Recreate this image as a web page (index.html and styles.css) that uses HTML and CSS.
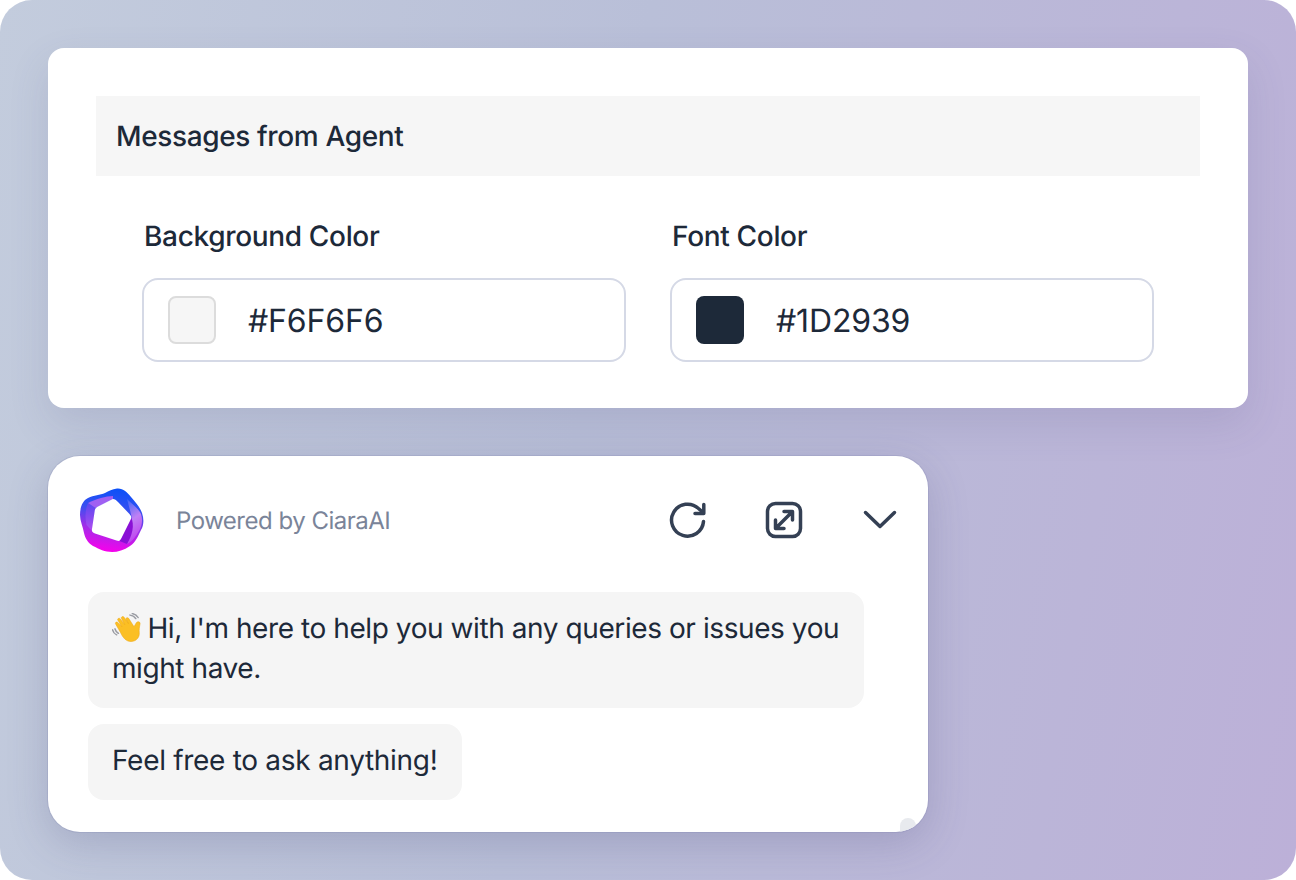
FILE: index.html
```html
<!DOCTYPE html>
<html lang="en">
<head>
    <meta charset="UTF-8">
    <meta name="viewport" content="width=device-width, initial-scale=1.0">
    <title>Chat widget colors</title>
    <link rel="stylesheet" href="styles.css">
</head>
<body>
    <div class="frame">
        <!-- Color settings -->
        <section class="card">
            <div class="card-title">Messages from Agent</div>
            <div class="fields">
                <div class="field">
                    <label>Background Color</label>
                    <div class="color-input">
                        <span class="swatch swatch-light"></span>
                        <span class="color-value">#F6F6F6</span>
                    </div>
                </div>
                <div class="field">
                    <label>Font Color</label>
                    <div class="color-input">
                        <span class="swatch swatch-dark"></span>
                        <span class="color-value">#1D2939</span>
                    </div>
                </div>
            </div>
        </section>

        <!-- Chat preview -->
        <section class="chat">
            <div class="chat-head">
                <svg class="logo" width="64" height="64" viewBox="0 0 64 64">
                    <defs>
                        <linearGradient id="ring" x1="0.6" y1="0" x2="0.45" y2="1">
                            <stop offset="0" stop-color="#0a50f8"/>
                            <stop offset="0.35" stop-color="#3a50f0"/>
                            <stop offset="0.65" stop-color="#a02ee8"/>
                            <stop offset="1" stop-color="#f800ec"/>
                        </linearGradient>
                        <linearGradient id="band" x1="0.2" y1="0" x2="0.5" y2="1">
                            <stop offset="0" stop-color="#3a66f5"/>
                            <stop offset="0.5" stop-color="#c080f5"/>
                            <stop offset="1" stop-color="#c040ee"/>
                        </linearGradient>
                        <linearGradient id="side" x1="0.5" y1="0" x2="0.5" y2="1">
                            <stop offset="0" stop-color="#5a48f0"/>
                            <stop offset="1" stop-color="#b04cf0"/>
                        </linearGradient>
                    </defs>
                    <path fill="url(#ring)" d="M37 0.500C43 0 47 4 51 9C55 14 60 19 62 25C64 31 64 37 61 42C58 48 56 54 50 58C44 62 38 64 32 64C25 64 19 61 13 58C8 55 5 50 4 45C3 39 0 33 0 27C0 20 2 13 8 10C14 7 20 7 25 5C29 3 32 1 37 0.500Z"/>
                    <path fill="url(#band)" d="M47 11C52 16 59 21 61 26C63 32 62 38 59 43C56 48 53 53 47 56L43 50L52 30Z"/>
                    <path fill="#8a10d6" d="M51 29L39.500 53L47 56C52 48 55 37 51 29Z"/>
                    <path fill="url(#side)" d="M15.500 20L12 43L6.500 37C5 30 5 22 8 15Z"/>
                    <path fill="#a060f2" d="M8 15C16 11 26 8 33 8L33 11L15.500 20Z"/>
                    <path fill="#fff" d="M32.700 11C34.500 10.800 36 12 38 14L49 25.500C51.500 28 51.800 29.500 50.700 31.500L41.500 50C40 53 39 53.300 36.500 52.500L15 45.500C12.200 44.500 11.700 43.500 12 41L14.700 23C15 20.800 15.700 20 17.500 18.800Z"/>
                </svg>
                <span class="powered">Powered by CiaraAI</span>
                <div class="chat-actions">
                    <svg width="40" height="40" viewBox="0 0 40 40" fill="none" stroke="#344054" stroke-width="3.500" stroke-linecap="round" stroke-linejoin="round">
                        <path d="M35.500 21.500A16 16 0 1 1 30.500 8.500L35 12.500"/>
                        <path d="M35.800 4.500V13.500H27"/>
                    </svg>
                    <svg width="40" height="40" viewBox="0 0 40 40" fill="none" stroke="#344054" stroke-width="3.500" stroke-linecap="round" stroke-linejoin="round">
                        <rect x="3.500" y="3.500" width="33" height="33" rx="8"/>
                        <path d="M12.500 27.500L27.500 12.500M20 11.500H28.500V20M11.500 20V28.500H20"/>
                    </svg>
                    <svg width="40" height="40" viewBox="0 0 40 40" fill="none" stroke="#344054" stroke-width="3.500" stroke-linecap="round" stroke-linejoin="round">
                        <path d="M5.500 12.500L20 26.500L34.500 12.500"/>
                    </svg>
                </div>
            </div>
            <div class="messages">
                <div class="bubble bubble-wide">
                    <svg class="wave" width="29" height="29" viewBox="0.5 0.5 25 28.500" preserveAspectRatio="none">
                        <g fill="none" stroke="#9a9ca3" stroke-width="1.300" stroke-linecap="round">
                            <path d="M16 2.500C18.500 2.800 20 4 21 6M18 1C20.500 1.500 22 3 23 5"/>
                            <path d="M1 17C1.500 19.500 2.500 21 4.500 22M3 16C3.500 18 4.500 19.500 6 20.500"/>
                        </g>
                        <path fill="#fbbf24" stroke="#eea70e" stroke-width="0.500" d="M8 20L3.500 11C3 9.700 4.800 8.800 5.700 10L9 14L5.500 7.500C4.800 6 6.800 5 7.700 6.300L11.500 12L8.700 5.800C8 4.300 10 3.300 10.900 4.600L14.700 11L12.700 6.800C12 5.300 14 4.400 14.800 5.700L19.500 14L21.500 10C22.300 8.500 25 9 24.700 11C24.200 14 23.700 17 24 20C24.300 24 22 28 17.500 28.500C13 29 10 25 8 20Z"/>
                    </svg>
                    Hi, I'm here to help you with any queries or issues you might have.
                </div>
                <div class="bubble bubble-short">Feel free to ask anything!</div>
            </div>
            <span class="scroll-thumb"></span>
        </section>
    </div>
</body>
</html>
```

FILE: styles.css
```css
* { box-sizing: border-box; }
html, body { margin: 0; background: #fff; }
body { font-family: Inter, "Liberation Sans", sans-serif; color: #1d2939; text-rendering: geometricPrecision; }

.frame { width: 1296px; height: 880px; padding: 48px; display: flex; flex-direction: column; align-items: flex-start; gap: 48px; border-radius: 32px; overflow: hidden; background: linear-gradient(100deg, #c3ccdd 0%, #b9bfd8 45%, #bcb0d8 100%); }

.card { width: 1200px; height: 360px; padding: 48px; background: #fff; border-radius: 16px; box-shadow: 0 16px 40px rgba(80, 80, 130, 0.14); }
.card-title { height: 80px; padding: 0 20px; display: flex; align-items: center; background: #f6f6f6; font-size: 28px; font-weight: 500; letter-spacing: -0.37px; }
.fields { display: flex; gap: 44px; padding: 40px 46px 0; }
.field { width: 484px; }
.field label { display: block; padding-left: 2px; margin-bottom: 22px; font-size: 28px; font-weight: 500; line-height: 40px; letter-spacing: -0.33px; }
.color-input { height: 84px; padding: 2px 24px 0; display: flex; align-items: center; gap: 32px; border: 2px solid #d5d9e6; border-radius: 16px; }
.swatch { width: 48px; height: 48px; margin-top: -2px; border-radius: 8px; }
.swatch-light { background: #f6f6f6; border: 2px solid #dcdcdc; }
.swatch-dark { background: #1d2939; }
.color-value { font-size: 32px; line-height: 44px; letter-spacing: -0.15px; }

.chat { position: relative; width: 880px; height: 376px; padding: 32px 28px 0 32px; background: #fff; border-radius: 32px; overflow: hidden; box-shadow: 0 0 0 1px rgba(120, 125, 170, 0.2), 0 12px 40px rgba(70, 70, 120, 0.22); }
.chat-head { display: flex; align-items: center; height: 64px; }
.logo { flex: none; }
.powered { margin-left: 32px; font-size: 24px; letter-spacing: -0.5px; color: #7a8499; }
.chat-actions { margin-left: auto; display: flex; gap: 56px; }
.messages { display: flex; flex-direction: column; align-items: flex-start; gap: 16px; margin: 40px 0 0 8px; }
.bubble { padding: 16px 24px 20px; background: #f5f5f5; border-radius: 16px; font-size: 28px; line-height: 40px; letter-spacing: -0.3px; }
.bubble-wide { width: 776px; padding-right: 16px; letter-spacing: -0.42px; }
.bubble-short { padding-right: 25px; }
.wave { vertical-align: -4px; margin-right: -1px; }
.scroll-thumb { position: absolute; right: 12px; bottom: -6px; width: 16px; height: 20px; background: #e8eaee; border-radius: 8px; }
```
